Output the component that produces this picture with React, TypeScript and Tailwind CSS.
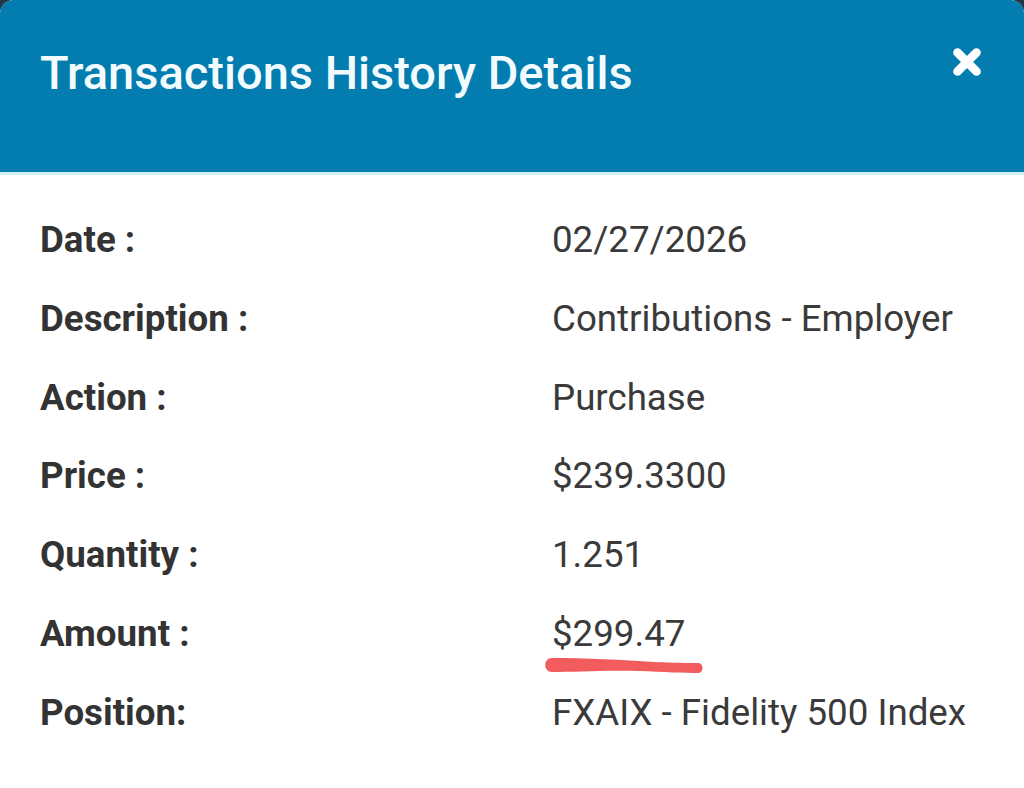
import { X } from "lucide-react";

const rows: { label: string; value: string; mark?: boolean }[] = [
  { label: "Date :", value: "02/27/2026" },
  { label: "Description :", value: "Contributions - Employer" },
  { label: "Action :", value: "Purchase" },
  { label: "Price :", value: "$239.3300" },
  { label: "Quantity :", value: "1.251" },
  { label: "Amount :", value: "$299.47", mark: true },
  { label: "Position:", value: "FXAIX - Fidelity 500 Index" },
];

// hand-drawn red underline under the amount
function Scribble() {
  return (
    <svg className="absolute left-[-8px] top-[40px]" width="170" height="24" viewBox="0 0 170 24">
      <path
        d="M8 4 C 40 4, 80 6, 110 8 C 135 9, 148 9, 154 9 C 160 9, 160 19, 154 19 C 140 19, 120 18, 95 17 C 60 16, 30 18, 8 18 C -1 18, -1 4, 8 4 Z"
        fill="#f25c5c"
      />
    </svg>
  );
}

export default function App() {
  return (
    <div className="h-[788px] w-[1024px] bg-[#1d3a48] font-['Roboto',sans-serif]">
      <div className="h-full overflow-hidden rounded-t-[14px] bg-white">
        <div className="flex h-[172px] items-start justify-between bg-[#037caf] pl-[40px] pr-[38px] pt-[45px]">
          <h2 className="text-[47px] font-medium leading-[56px] text-[#f2fcff]">Transactions History Details</h2>
          <X size={38} strokeWidth={5.5} className="mt-[-2px] text-white" />
        </div>
        <div className="h-[3px] bg-[#cfeef6]" />
        <div className="flex flex-col pl-[40px] pt-[45px] text-[#333333]">
          {rows.map((r) => (
            <div key={r.label} className="flex h-[78.8px] items-start">
              <div className="w-[512px] text-[36.7px] font-bold leading-[40px]">{r.label}</div>
              <div className="relative text-[36.7px] leading-[40px] text-[#3a3a3a]">
                {r.value}
                {r.mark && <Scribble />}
              </div>
            </div>
          ))}
        </div>
      </div>
    </div>
  );
}
